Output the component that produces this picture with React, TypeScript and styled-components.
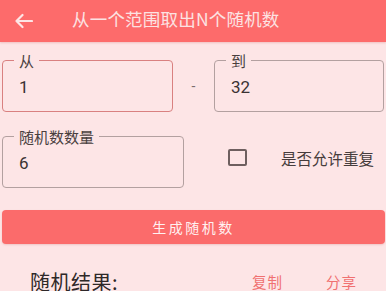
import React from "react";
import styled, { createGlobalStyle } from "styled-components";

const GlobalStyle = createGlobalStyle`
  html, body {
    margin: 0;
    padding: 0;
    background: #fde5e6;
    overflow: hidden;
  }
  body {
    font-family: Roboto, "Noto Sans CJK SC", sans-serif;
  }
`;

const Page = styled.div`
  width: 386px;
  height: 291px;
  background: #fde5e6;
  overflow: hidden;
`;

const Header = styled.div`
  height: 42px;
  display: flex;
  align-items: center;
  background: #fd6b6b;
  box-shadow: 0 1px 2px rgba(200, 80, 80, 0.25);
`;

const BackButton = styled.div`
  width: 19px;
  height: 16px;
  margin-left: 14px;
  display: flex;
  align-items: center;
`;

const Title = styled.div`
  margin-left: 39px;
  margin-top: -6px;
  font-family: "Noto Sans CJK SC", sans-serif;
  font-size: 17.5px;
  color: #fce2e2;
  letter-spacing: 0.2px;
`;

const Form = styled.div`
  padding: 9.5px 2px 0 2px;
`;

const RangeRow = styled.div`
  display: grid;
  grid-template-columns: 171px 41px 170px;
  align-items: center;
`;

const Dash = styled.div`
  text-align: center;
  color: #7a6d6d;
  font-size: 14px;
  padding-top: 8px;
`;

const Field = styled.fieldset<{ $focused?: boolean }>`
  margin: 0;
  min-width: 0;
  padding: 0 0 0 11px;
  border: 1.5px solid ${(p) => (p.$focused ? "#d98080" : "#b3a0a0")};
  border-radius: 4px;
`;

const Legend = styled.legend`
  padding: 0 5px;
  font-family: "Noto Sans CJK SC", sans-serif;
  font-size: 15px;
  line-height: 18px;
  color: #4a3f3f;
`;

const Value = styled.div`
  padding: 5px 0 12px 5px;
  font-family: Roboto, sans-serif;
  font-size: 17px;
  line-height: 24px;
  color: #3a3232;
`;

const OptionRow = styled.div`
  display: flex;
  align-items: center;
  margin-top: 16px;
`;

const CountField = styled(Field)`
  width: 182px;
  box-sizing: border-box;
`;

const CheckBox = styled.div`
  width: 19px;
  height: 17px;
  margin-left: 44px;
  border: 2.5px solid #6e5f5f;
  border-radius: 2px;
  box-sizing: border-box;
`;

const CheckLabel = styled.div`
  margin-left: 34px;
  font-family: "Noto Sans CJK SC", sans-serif;
  font-size: 15.5px;
  color: #463c3c;
`;

const GenerateButton = styled.div`
  margin-top: 22.5px;
  width: 383px;
  height: 34px;
  display: flex;
  align-items: center;
  justify-content: center;
  background: #fb6b6b;
  border-radius: 4px;
  box-shadow: 0 1px 2px rgba(180, 70, 70, 0.2);
  font-family: "Noto Sans CJK SC", sans-serif;
  font-size: 14px;
  letter-spacing: 2.5px;
  color: #fff1f1;
`;

const ResultRow = styled.div`
  display: flex;
  align-items: center;
  margin-top: 24px;
  padding: 0 29px 0 30px;
`;

const ResultTitle = styled.div`
  font-family: "Noto Sans CJK SC", sans-serif;
  font-size: 20px;
  line-height: 28px;
  color: #2e2828;
  letter-spacing: 0.5px;
`;

const Action = styled.div<{ $first?: boolean }>`
  margin-left: ${(p) => (p.$first ? "auto" : "43px")};
  margin-top: -2px;
  font-family: "Noto Sans CJK SC", sans-serif;
  font-size: 14.5px;
  letter-spacing: 1px;
  color: #f07070;
`;

export default function App() {
  return (
    <Page>
      <GlobalStyle />
      <Header>
        <BackButton>
          <svg width="19" height="16" viewBox="0 0 19 16" fill="none">
            <path
              d="M18 8H2.5M8.5 2L2.5 8l6 6"
              stroke="#fde6e6"
              strokeWidth="2.2"
              strokeLinecap="round"
              strokeLinejoin="round"
            />
          </svg>
        </BackButton>
        <Title>从一个范围取出N个随机数</Title>
      </Header>
      <Form>
        <RangeRow>
          <Field $focused>
            <Legend>从</Legend>
            <Value>1</Value>
          </Field>
          <Dash>-</Dash>
          <Field>
            <Legend>到</Legend>
            <Value>32</Value>
          </Field>
        </RangeRow>
        <OptionRow>
          <CountField>
            <Legend>随机数数量</Legend>
            <Value>6</Value>
          </CountField>
          <CheckBox />
          <CheckLabel>是否允许重复</CheckLabel>
        </OptionRow>
        <GenerateButton>生成随机数</GenerateButton>
      </Form>
      <ResultRow>
        <ResultTitle>随机结果:</ResultTitle>
        <Action $first>复制</Action>
        <Action>分享</Action>
      </ResultRow>
    </Page>
  );
}
